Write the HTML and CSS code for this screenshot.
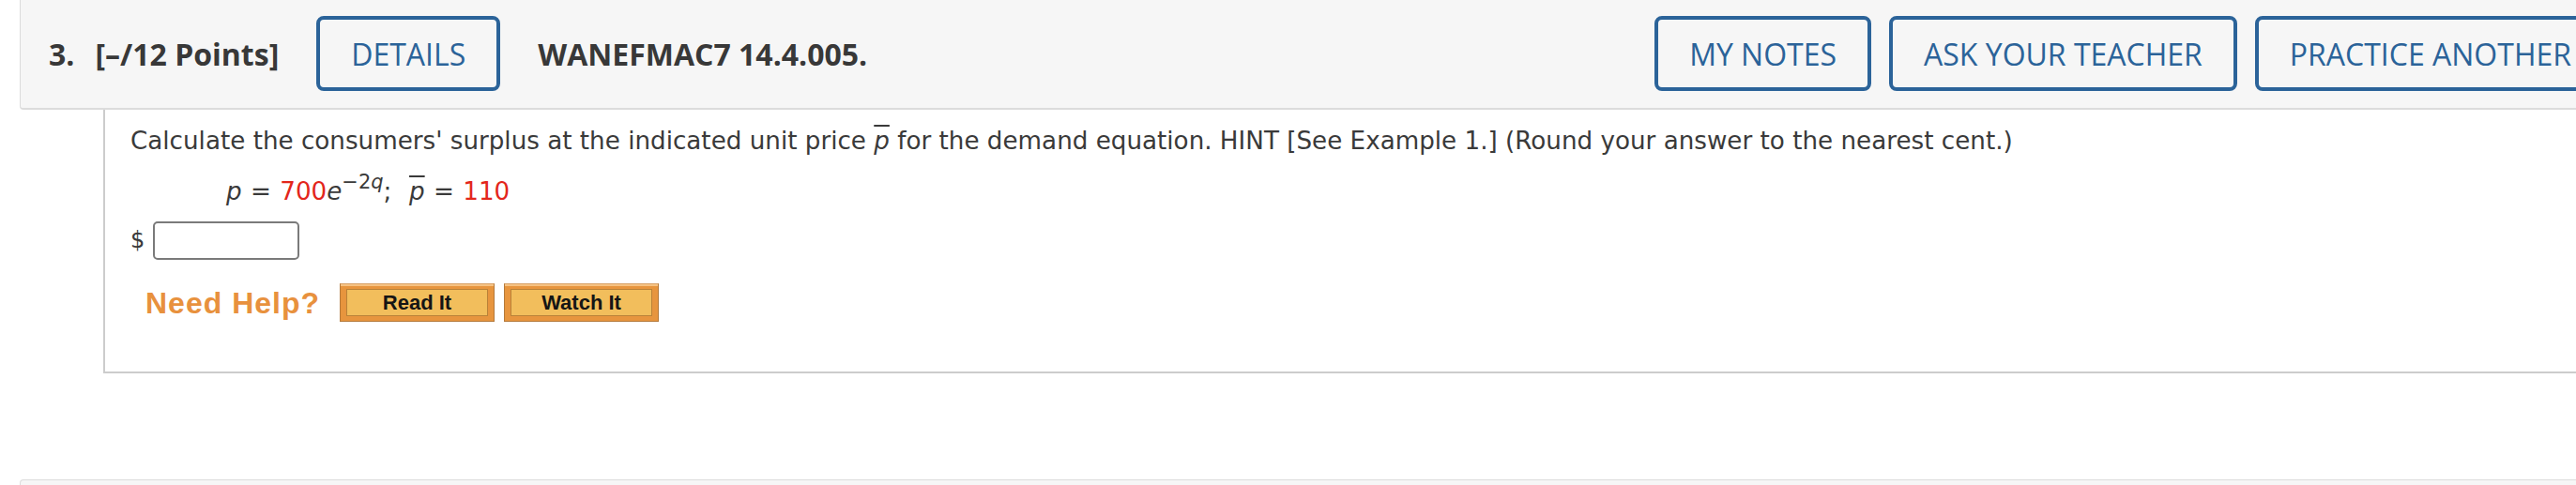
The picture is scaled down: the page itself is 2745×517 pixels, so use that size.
FILE: index.html
```html
<!DOCTYPE html>
<html lang="en">
<head>
<meta charset="utf-8">
<title>WANEFMAC7 14.4.005.</title>
<link rel="stylesheet" href="styles.css">
</head>
<body>
<div class="page">
  <div class="q-header">
    <span class="q-num">3.</span>
    <span class="q-points">[–/12 Points]</span>
    <button class="btn btn-details">DETAILS</button>
    <span class="q-title">WANEFMAC7 14.4.005.</span>
    <div class="actions">
      <button class="btn">MY NOTES</button>
      <button class="btn">ASK YOUR TEACHER</button>
      <button class="btn">PRACTICE ANOTHER</button>
    </div>
  </div>
  <div class="q-body">
    <p class="prompt">Calculate the consumers' surplus at the indicated unit price <i class="pbar">p</i> for the demand equation. HINT [See Example 1.] (Round your answer to the nearest cent.)</p>
    <div class="eq"><i>p</i> = <span class="red">700</span><i>e</i><sup>−2<i>q</i></sup>;&nbsp; <i class="pbar">p</i> = <span class="red">110</span></div>
    <div class="answer"><span class="dollar">$</span><input class="answer-input" type="text"></div>
    <div class="help">
      <span class="need">Need Help?</span>
      <button class="hbtn"><span class="hbtn-inner">Read It</span></button>
      <button class="hbtn"><span class="hbtn-inner">Watch It</span></button>
    </div>
  </div>
  <div class="next-header"></div>
</div>
</body>
</html>
```
FILE: styles.css
```css
html, body {
  margin: 0;
  padding: 0;
  overflow: hidden;
  background: #ffffff;
}

.page {
  width: 2830px;
}

.q-header {
  box-sizing: border-box;
  margin-left: 21px;
  width: 2776px;
  display: flex;
  align-items: center;
  padding: 17px 20px 18px 30px;
  background: #f6f6f6;
  border-left: 1px solid #dcdcdc;
  border-bottom: 2px solid #dcdcdc;
  border-bottom-left-radius: 4px;
  font-family: "Open Sans", "Liberation Sans", sans-serif;
  color: #383838;
}

.q-num,
.q-points,
.q-title {
  font-weight: 700;
  font-size: 32px;
  white-space: nowrap;
}

.q-points {
  margin-left: 22px;
  margin-right: 40px;
}

.q-title {
  margin-left: 40px;
  flex: 1;
}

.actions {
  display: flex;
  gap: 19px;
}

.btn {
  box-sizing: border-box;
  height: 80px;
  padding: 0 33px;
  border: 4px solid #2b6399;
  border-radius: 8px;
  background: transparent;
  color: #2b6399;
  font-family: "Open Sans", "Liberation Sans", sans-serif;
  font-size: 32px;
  font-weight: 500;
  white-space: nowrap;
}

.q-body {
  box-sizing: border-box;
  margin-left: 110px;
  width: 2720px;
  height: 281px;
  padding: 16px 0 0 27px;
  border-left: 2px solid #cccccc;
  border-bottom: 2px solid #cccccc;
  font-family: Verdana, "DejaVu Sans", sans-serif;
  font-size: 26.2px;
  line-height: 34px;
  color: #3a3a3a;
}

.prompt {
  margin: 0;
  white-space: nowrap;
}

.pbar {
  text-decoration: overline;
}

.eq {
  margin-top: 20px;
  padding-left: 102px;
  white-space: nowrap;
  word-spacing: 1px;
}

.eq sup {
  font-size: 0.8em;
  line-height: 0;
  vertical-align: 0.58em;
}

.red {
  color: #e3261b;
}

.answer {
  display: flex;
  align-items: center;
  gap: 9px;
  margin-top: 15px;
}

.dollar {
  line-height: 41px;
  font-size: 24px;
}

.answer-input {
  box-sizing: border-box;
  width: 156px;
  height: 41px;
  margin: 0;
  border: 2px solid #7a7a7a;
  border-radius: 5px;
  background: #ffffff;
}

.help {
  display: flex;
  align-items: center;
  margin-top: 25px;
}

.need {
  margin-left: 16px;
  margin-right: 21px;
  font-family: "Liberation Sans", Arial, sans-serif;
  font-weight: 700;
  font-size: 32px;
  letter-spacing: 1px;
  color: #e8913d;
}

.hbtn {
  box-sizing: border-box;
  width: 165px;
  height: 41px;
  margin: 0 10px 0 0;
  padding: 5px 6px 5px 6px;
  border: 1px solid #b4793a;
  border-top-color: #d9a36a;
  background: #e7953e;
  box-shadow: inset 0 2px 0 #f6c283;
  cursor: pointer;
}

.hbtn-inner {
  display: flex;
  align-items: center;
  justify-content: center;
  height: 100%;
  box-sizing: border-box;
  border: 1px solid #b98238;
  background: #f2be5c;
  font-family: "Liberation Sans", Arial, sans-serif;
  font-weight: 700;
  font-size: 22px;
  color: #151515;
}

.next-header {
  box-sizing: border-box;
  margin-top: 113px;
  margin-left: 21px;
  width: 2776px;
  height: 60px;
  background: #f6f6f6;
  border-top: 1px solid #dcdcdc;
  border-left: 1px solid #dcdcdc;
  border-top-left-radius: 4px;
}
```
